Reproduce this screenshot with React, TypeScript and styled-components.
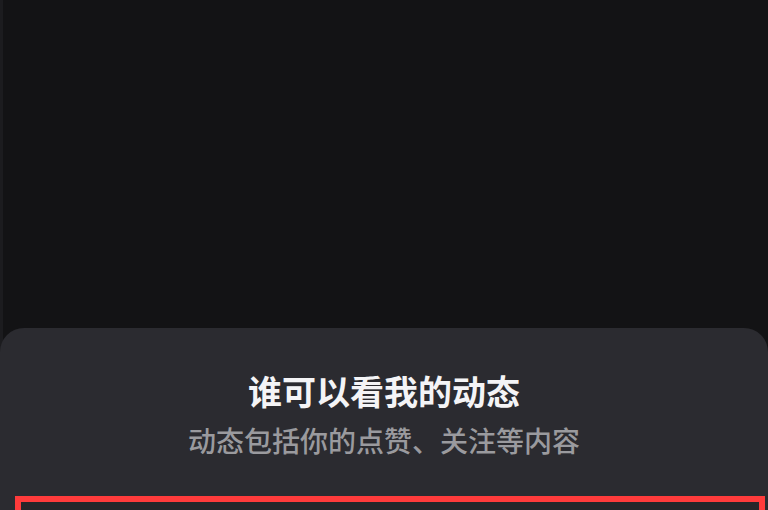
import React from 'react';
import styled, { createGlobalStyle } from 'styled-components';

const GlobalStyle = createGlobalStyle`
    html, body {
        margin: 0;
        padding: 0;
        background: #131315;
    }
    #root {
        height: 510px;
        overflow: hidden;
    }
`;

const Screen = styled.div`
    display: flex;
    flex-direction: column;
    height: 510px;
    background: #131315;
    border-left: 3px solid #1c1c1f;
    box-sizing: border-box;
    font-family: "Noto Sans CJK SC", "Noto Sans", sans-serif;
`;

const Backdrop = styled.div`
    flex: 0 0 328px;
`;

const Sheet = styled.div`
    flex: 1;
    display: flex;
    flex-direction: column;
    align-items: center;
    background: #2b2b30;
    border-radius: 24px 24px 0 0;
    padding-top: 43px;
    margin-left: -3px;
`;

const Title = styled.h2`
    margin: 0;
    font-size: 34px;
    line-height: 40px;
    font-weight: 700;
    color: #f4f4f6;
`;

const Subtitle = styled.p`
    margin: 11px 0 0;
    font-size: 28px;
    line-height: 36px;
    font-weight: 500;
    color: #9a9a9e;
`;

const Highlight = styled.div`
    align-self: stretch;
    margin: 38px 3px 0 15px;
    height: 60px;
    border: 6px solid #ff3b3b;
    background: #26262a;
`;

const App: React.FC = () => {
    return (
        <>
            <GlobalStyle />
            <Screen>
                <Backdrop />
                <Sheet>
                    <Title>谁可以看我的动态</Title>
                    <Subtitle>动态包括你的点赞、关注等内容</Subtitle>
                    <Highlight />
                </Sheet>
            </Screen>
        </>
    );
}

export default App;
